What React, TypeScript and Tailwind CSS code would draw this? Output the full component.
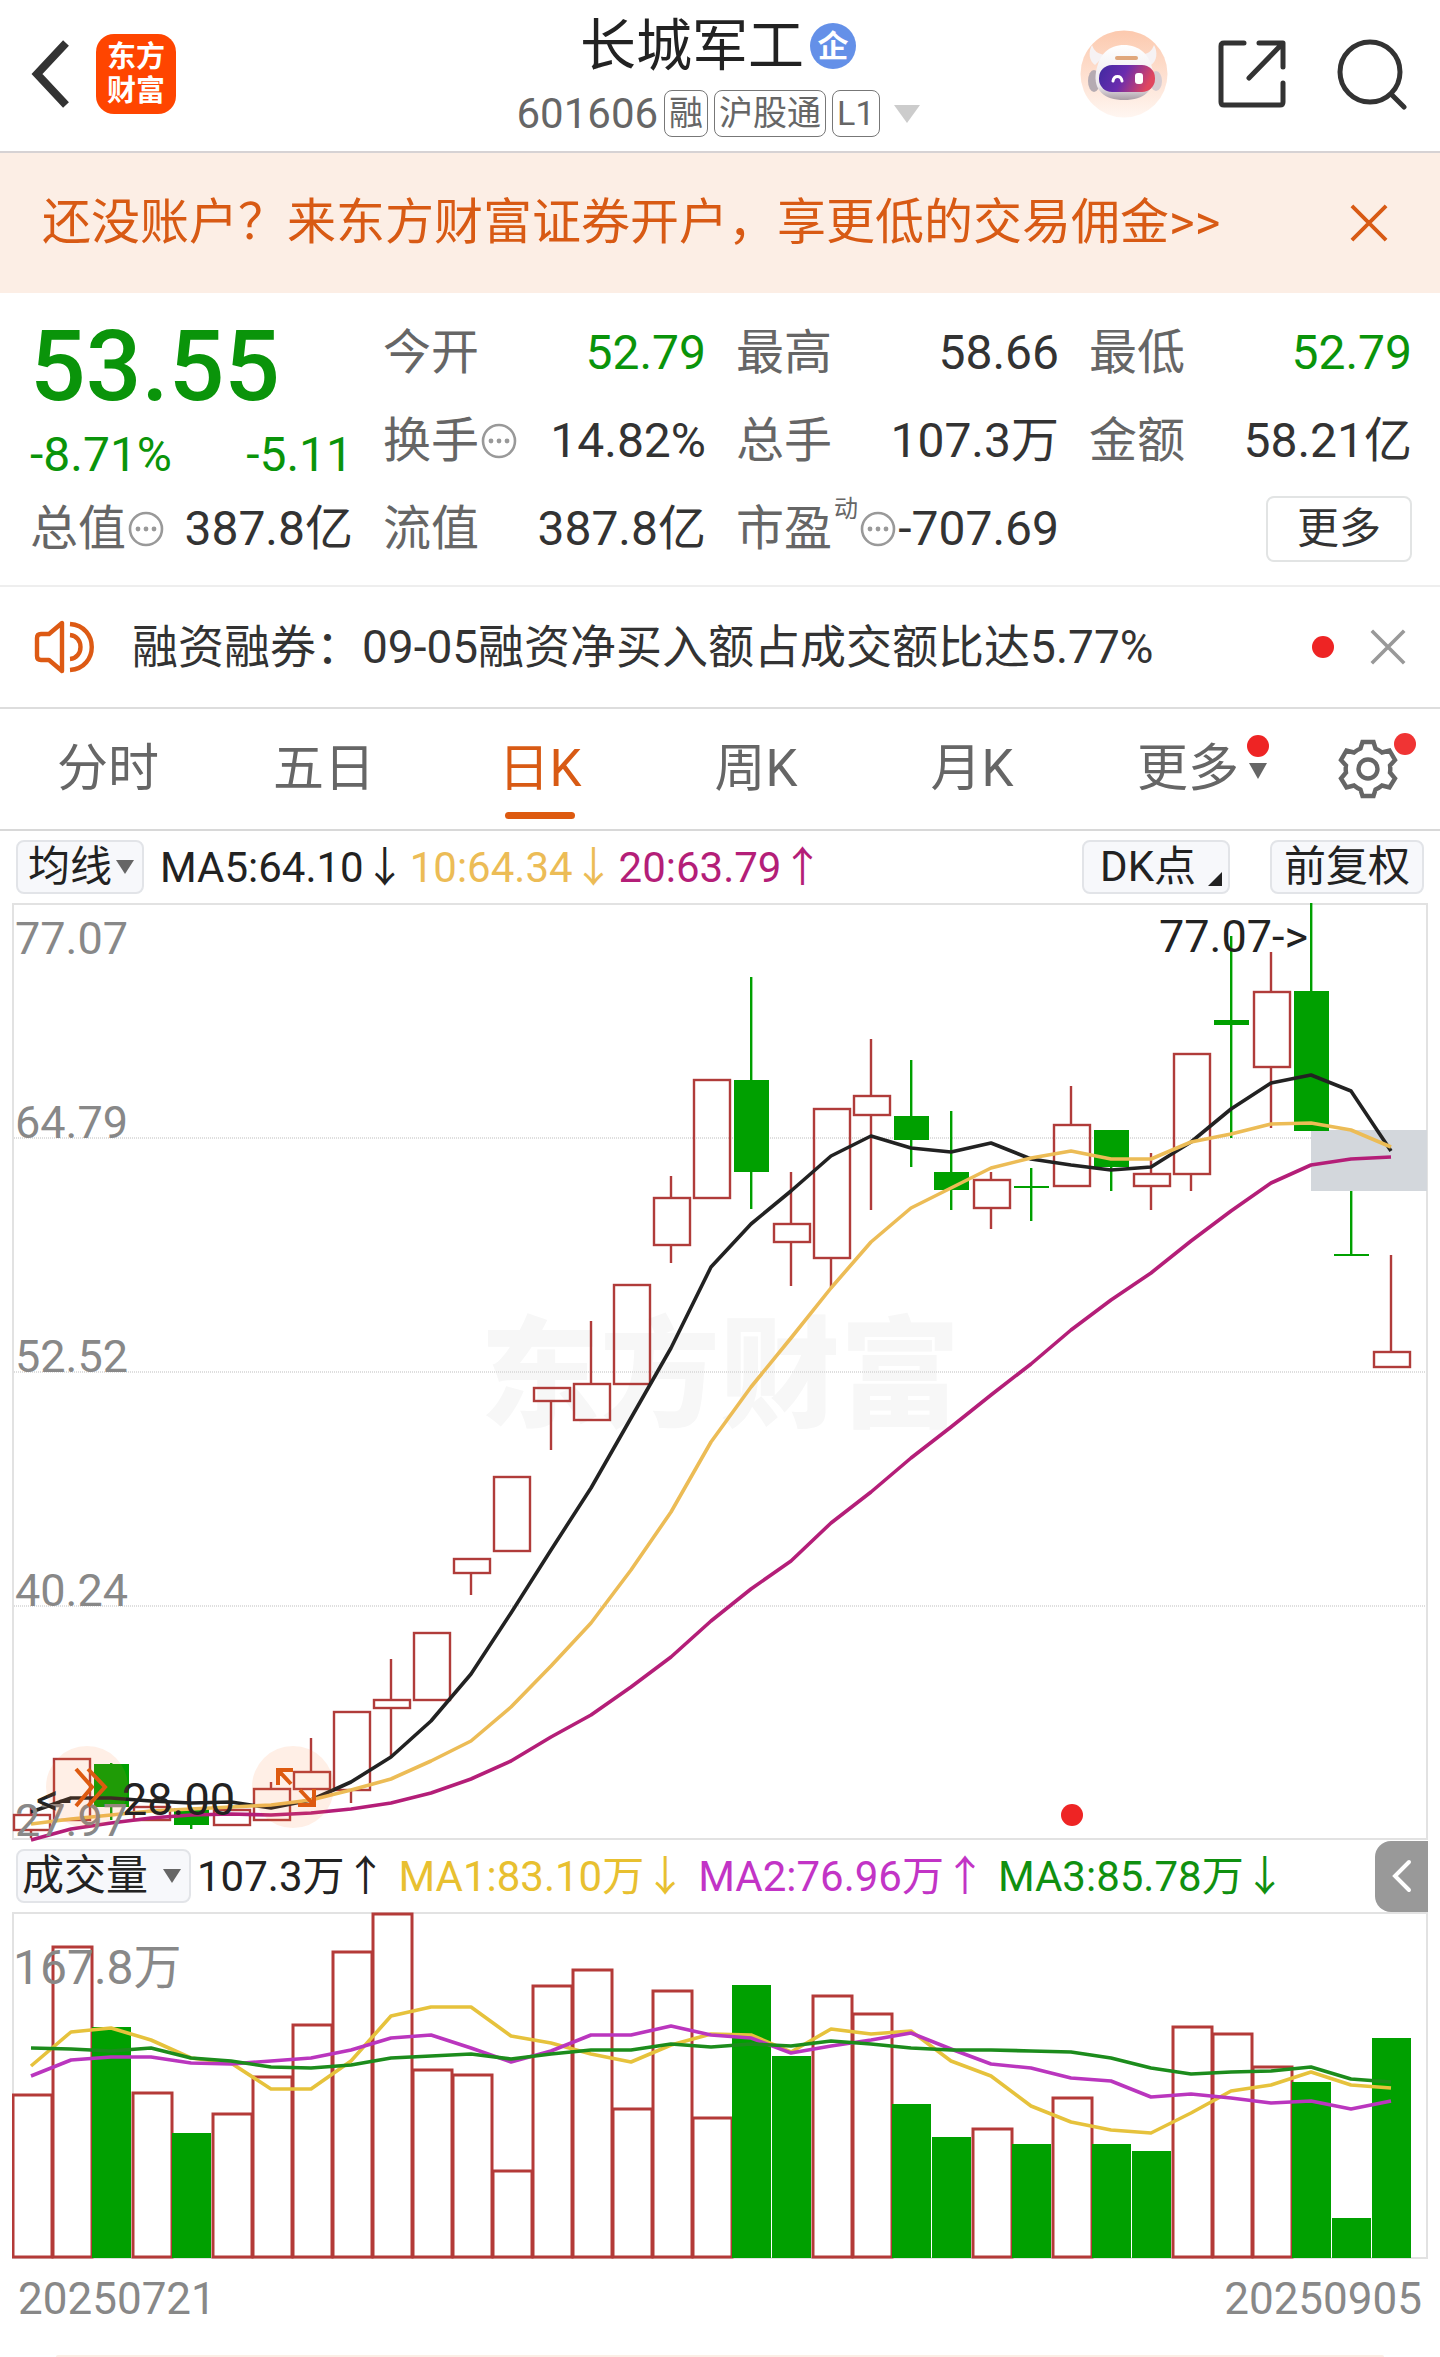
import React from "react";

type Candle = { up: boolean; top: number; bottom: number; high: number; low: number };

const STEP = 40;
const FIRST = 31;

const c = (up: boolean, top: number, bottom: number, high = top, low = bottom): Candle => ({ up, top, bottom, high, low });

const candles: Candle[] = [
  c(true, 1815, 1830, 1806, 1838),
  c(true, 1759, 1820),
  c(false, 1764, 1807, 1763, 1820),
  c(true, 1807, 1820),
  c(false, 1808, 1825, 1808, 1829),
  c(true, 1810, 1825, 1792),
  c(true, 1789, 1820, 1782),
  c(true, 1772, 1789, 1738),
  c(true, 1712, 1790, 1712, 1803),
  c(true, 1700, 1708, 1659, 1757),
  c(true, 1633, 1700),
  c(true, 1559, 1573, 1559, 1595),
  c(true, 1477, 1551),
  c(true, 1388, 1401, 1388, 1450),
  c(true, 1384, 1420, 1321),
  c(true, 1285, 1384),
  c(true, 1198, 1245, 1176, 1263),
  c(true, 1080, 1198),
  c(false, 1080, 1172, 977, 1209),
  c(true, 1224, 1242, 1172, 1286),
  c(true, 1109, 1258, 1109, 1288),
  c(true, 1096, 1115, 1039, 1210),
  c(false, 1116, 1140, 1060, 1167),
  c(false, 1172, 1190, 1111, 1210),
  c(true, 1180, 1208, 1172, 1229),
  c(false, 1186, 1188, 1168, 1221),
  c(true, 1125, 1186, 1086),
  c(false, 1130, 1167, 1130, 1191),
  c(true, 1174, 1186, 1153, 1210),
  c(true, 1054, 1174, 1054, 1191),
  c(false, 1020, 1025, 936, 1138),
  c(true, 992, 1067, 952, 1128),
  c(false, 991, 1131, 903),
  c(false, 1254, 1256, 1191, 1256),
  c(true, 1352, 1367, 1255),
];

const ma5 = [1812, 1798, 1798, 1801, 1803, 1802, 1808, 1800, 1782, 1757, 1721, 1674, 1613, 1550, 1488, 1418, 1348, 1267, 1224, 1191, 1156, 1136, 1148, 1152, 1143, 1159, 1165, 1170, 1167, 1142, 1109, 1083, 1075, 1091, 1151];
const ma10 = [1824, 1819, 1815, 1811, 1809, 1807, 1805, 1800, 1790, 1779, 1761, 1741, 1707, 1666, 1623, 1570, 1512, 1442, 1387, 1338, 1288, 1242, 1208, 1188, 1168, 1158, 1151, 1159, 1159, 1142, 1134, 1124, 1123, 1130, 1147];
const ma20 = [1840, 1829, 1823, 1818, 1815, 1814, 1815, 1813, 1809, 1803, 1793, 1779, 1761, 1737, 1715, 1687, 1657, 1621, 1589, 1561, 1523, 1492, 1458, 1427, 1395, 1364, 1330, 1300, 1273, 1241, 1211, 1183, 1165, 1159, 1157];

const volumeTops = [2095, 1947, 2027, 2093, 2133, 2114, 2077, 2025, 1952, 1914, 2070, 2075, 2171, 1986, 1970, 2109, 1991, 2118, 1985, 2056, 1996, 2014, 2104, 2137, 2129, 2144, 2098, 2144, 2151, 2027, 2034, 2067, 2082, 2218, 2038];
const fallingVolume = new Set([2, 4, 18, 19, 22, 23, 25, 27, 28, 32, 33, 34]);
const vma1 = [2066, 2032, 2028, 2040, 2058, 2063, 2089, 2089, 2061, 2016, 2007, 2007, 2036, 2043, 2054, 2062, 2045, 2034, 2035, 2052, 2029, 2034, 2031, 2061, 2076, 2106, 2122, 2130, 2133, 2113, 2091, 2085, 2072, 2085, 2088];
const vma2 = [2076, 2060, 2057, 2057, 2063, 2064, 2061, 2058, 2050, 2038, 2035, 2048, 2062, 2051, 2035, 2035, 2026, 2035, 2038, 2053, 2046, 2040, 2033, 2049, 2064, 2068, 2078, 2081, 2097, 2094, 2098, 2103, 2101, 2109, 2101];
const vma3 = [2048, 2049, 2051, 2048, 2058, 2061, 2067, 2068, 2065, 2058, 2056, 2054, 2059, 2054, 2050, 2050, 2044, 2047, 2044, 2046, 2041, 2044, 2048, 2050, 2050, 2051, 2052, 2058, 2068, 2074, 2072, 2071, 2067, 2079, 2082];

const points = (ys: number[]) => ys.map((y, i) => `${FIRST + STEP * i},${y}`).join(" ");

function Line({ ys, color }: { ys: number[]; color: string }) {
  return <polyline points={points(ys)} fill="none" stroke={color} strokeWidth={3.6} strokeLinejoin="round" />;
}

function MoreDots() {
  return (
    <svg viewBox="0 0 36 36" className="size-9 shrink-0" aria-hidden="true">
      <circle cx="18" cy="18" r="16" fill="none" stroke="#999" strokeWidth="2.6" />
      <circle cx="10" cy="18" r="2.4" fill="#999" />
      <circle cx="18" cy="18" r="2.4" fill="#999" />
      <circle cx="26" cy="18" r="2.4" fill="#999" />
    </svg>
  );
}

function Cross({ className, width }: { className: string; width: number }) {
  return (
    <svg viewBox="0 0 40 40" className={className} fill="none" stroke="currentColor" strokeWidth={width} aria-hidden="true">
      <path d="M2 2 38 38M38 2 2 38" />
    </svg>
  );
}

function Robot() {
  return (
    <svg viewBox="0 0 88 88" className="size-22" aria-hidden="true">
      <defs>
        <linearGradient id="halo" x1="0" y1="0" x2="0" y2="1">
          <stop offset="0" stopColor="#fcc9ae" />
          <stop offset="1" stopColor="#fff6f1" />
        </linearGradient>
        <linearGradient id="visor" x1="0" y1="0" x2="1" y2="0.25">
          <stop offset="0" stopColor="#3f2aa0" />
          <stop offset="0.5" stopColor="#6a2cae" />
          <stop offset="1" stopColor="#e0465f" />
        </linearGradient>
        <linearGradient id="shell" x1="0" y1="0" x2="0" y2="1">
          <stop offset="0" stopColor="#ffffff" />
          <stop offset="0.75" stopColor="#ece8ec" />
          <stop offset="1" stopColor="#a89ca4" />
        </linearGradient>
      </defs>
      <circle cx="44" cy="44" r="43.5" fill="url(#halo)" />
      <ellipse cx="14" cy="51" rx="6" ry="11" fill="#b5abb2" />
      <ellipse cx="76" cy="51" rx="6" ry="10" fill="#d6ccd2" />
      <path d="M12 15c-4 7-3 16 3 20l10-10c-7-1-11-4-13-10zM74 15c4 7 3 16-3 20L61 25c7-1 11-4 13-10z" fill="#f6f2f4" />
      <path d="M44 15c15 0 26 9 29 27 3 18-9 28-29 28S13 60 16 42c3-18 13-27 28-27z" fill="url(#shell)" />
      <rect x="35" y="26" width="23" height="4" rx="2" fill="#e0a77c" />
      <rect x="19" y="35" width="56" height="27" rx="13" fill="url(#visor)" />
      <path d="M33 51c1-6 8-6 9 0" fill="none" stroke="#fff" strokeWidth="3" strokeLinecap="round" />
      <rect x="55" y="43" width="8" height="11" rx="3" fill="#fff" />
    </svg>
  );
}

function Header() {
  const tag = "rounded-lg border border-[#777] px-1";
  return (
    <header className="grid h-[153px] grid-cols-[1fr_auto_1fr] border-b-2 border-[#d6d2d4] pr-8 pl-7">
      <div className="flex items-center gap-6 pb-1">
        <button aria-label="返回" className="text-[#333]">
          <svg viewBox="0 0 44 70" className="h-[70px] w-11" fill="none" stroke="currentColor" strokeWidth="8" aria-hidden="true">
            <path d="M38 4 9 35l29 31" />
          </svg>
        </button>
        <div className="flex size-20 flex-col items-center justify-center rounded-[18px] bg-[#ff4500] text-[29px] leading-[34px] font-bold text-white">
          <span>东方</span>
          <span>财富</span>
        </div>
      </div>
      <div className="flex flex-col items-center gap-1.5 pt-2">
        <h1 className="flex items-center gap-1.5 text-[56px] leading-[76px] text-[#222]">
          长城军工
          <span className="flex size-[46px] items-center justify-center rounded-full bg-[#6490e8] text-[31px] leading-none font-bold text-white">企</span>
        </h1>
        <div className="flex items-center gap-1.5 text-[34px] leading-[45px] text-[#666]">
          <span className="text-[42px]">601606</span>
          <span className={tag}>融</span>
          <span className={tag}>沪股通</span>
          <span className={tag}>L1</span>
          <svg viewBox="0 0 26 18" className="ml-2 h-[18px] w-[26px]" fill="#ccc" aria-hidden="true">
            <path d="M0 0h26L13 18z" />
          </svg>
        </div>
      </div>
      <div className="flex items-center justify-end gap-12 pb-1 text-[#333]">
        <button aria-label="智能助手"><Robot /></button>
        <button aria-label="分享">
          <svg viewBox="0 0 72 72" className="size-[72px]" fill="none" stroke="currentColor" strokeWidth="5" strokeLinecap="round" strokeLinejoin="round" aria-hidden="true">
            <path d="M28 5H8q-3 0-3 3v56q0 3 3 3h56q3 0 3-3V45M43 5h24v24M66 6 33 40" />
          </svg>
        </button>
        <button aria-label="搜索">
          <svg viewBox="0 0 72 72" className="size-[72px]" fill="none" stroke="currentColor" strokeWidth="5" strokeLinecap="round" aria-hidden="true">
            <circle cx="34" cy="34" r="30" />
            <path d="m56 57 12 12" />
          </svg>
        </button>
      </div>
    </header>
  );
}

const GREEN = "text-[#0a940a]";
const DARK = "text-[#333]";

function Stat({ label, value, color = DARK, dots = false, sup }: { label: string; value: string; color?: string; dots?: boolean; sup?: string }) {
  return (
    <div className="flex items-center justify-between whitespace-nowrap">
      <dt className="flex items-center gap-0.5 text-[#666]">
        {label}
        {sup && <sup className="-top-5 text-[24px] leading-none">{sup}</sup>}
        {dots && <MoreDots />}
      </dt>
      <dd className={color}>{value}</dd>
    </div>
  );
}

function Quote() {
  return (
    <section className="border-b-2 border-[#eee] pt-4 pr-7 pb-3 pl-[30px]">
      <dl className="grid auto-rows-[88px] grid-cols-4 gap-x-[30px] text-[48px]">
        <div className={`row-span-2 ${GREEN}`}>
          <dt className="text-[98px] leading-[116px] font-medium">53.55</dt>
          <dd className="flex justify-between leading-[60px]">
            <span>-8.71%</span>
            <span>-5.11</span>
          </dd>
        </div>
        <Stat label="今开" value="52.79" color={GREEN} />
        <Stat label="最高" value="58.66" />
        <Stat label="最低" value="52.79" color={GREEN} />
        <Stat label="换手" value="14.82%" dots />
        <Stat label="总手" value="107.3万" />
        <Stat label="金额" value="58.21亿" />
        <Stat label="总值" value="387.8亿" dots />
        <Stat label="流值" value="387.8亿" />
        <Stat label="市盈" value="-707.69" sup="动" dots />
        <div className="flex items-center justify-end">
          <button className="rounded-lg border-2 border-[#e2e4e4] px-[29px] text-[42px] leading-[62px] text-[#333]">更多</button>
        </div>
      </dl>
    </section>
  );
}

function News() {
  return (
    <section className="flex h-[122px] items-center border-b-2 border-[#ddd] pr-[34px] pl-8">
      <svg viewBox="0 0 64 56" className="h-14 w-16 shrink-0" fill="none" stroke="#dd5a14" strokeWidth="4.4" strokeLinejoin="round" aria-hidden="true">
        <path d="M30 4v48L17 41H9q-4 0-4-4V19q0-4 4-4h8zM38 16c14 1 14 23 0 24M38 5c29 2 29 44 0 46" />
      </svg>
      <a href="#news" className="ml-9 grow text-[46px] whitespace-nowrap text-[#333]">融资融券：09-05融资净买入额占成交额比达5.77%</a>
      <span className="size-[22px] rounded-full bg-[#ee2424]" />
      <button aria-label="关闭消息" className="ml-9 text-[#999]"><Cross className="size-9" width={4} /></button>
    </section>
  );
}

function Tabs() {
  const base = "relative flex h-full items-center justify-center";
  return (
    <nav className="grid h-[122px] grid-cols-[repeat(6,3fr)_2fr] border-b-2 border-[#d8d8d8] text-[51px] text-[#666]">
      <button className={base}>分时</button>
      <button className={base}>五日</button>
      <button className={`${base} text-[#d85a14]`} aria-current="page">
        日K
        <span className="absolute bottom-2.5 h-[7px] w-[70px] rounded-full bg-[#dd5a10]" />
      </button>
      <button className={base}>周K</button>
      <button className={base}>月K</button>
      <button className={base}>
        <span className="relative">
          更多
          <span className="absolute top-1 -right-[30px] size-[22px] rounded-full bg-[#ee2424]" />
          <svg viewBox="0 0 18 16" className="absolute top-8 -right-7 h-4 w-[18px]" fill="#666" aria-hidden="true">
            <path d="M0 0h18L9 16z" />
          </svg>
        </span>
      </button>
      <button className={base} aria-label="设置">
        <span className="relative">
          <svg viewBox="0 0 60 60" className="size-[60px]" fill="none" stroke="#666" strokeWidth="4.4" strokeLinejoin="miter" aria-hidden="true">
            <path d="M24.500 3H35.500L37.500 9.500Q41 11 44 13.500L51.500 11.500L57 21L52 26.500Q52.600 30 52 33.500L57 39.500L51.500 48.500L44 46.500Q41 49 37.500 50.500L35.500 57H24.500L22.500 50.500Q19 49 16 46.500L8.500 48.500L3 39.500L8 33.500Q7.400 30 8 26.500L3 21L8.500 11.500L16 13.500Q19 11 22.500 9.500Z" />
            <circle cx="30" cy="30" r="9.500" />
          </svg>
          <span className="absolute -top-1.5 -right-[18px] size-[22px] rounded-full bg-[#f03434]" />
        </span>
      </button>
    </nav>
  );
}

function Picker({ label, options, wide = false }: { label: string; options: string[]; wide?: boolean }) {
  return (
    <span className="relative flex items-center">
      <select
        aria-label={label}
        className={`h-[54px] appearance-none rounded-lg border-2 border-[#e2e4e8] bg-[#f7f8fb] text-[42px] leading-[50px] text-[#222] ${wide ? "w-[175px] pl-1" : "w-32 pl-2.5"}`}
      >
        {options.map((o) => (
          <option key={o}>{o}</option>
        ))}
      </select>
      <svg viewBox="0 0 18 14" className="pointer-events-none absolute right-2.5 h-3.5 w-[18px]" fill="#666" aria-hidden="true">
        <path d="M0 0h18L9 14z" />
      </svg>
    </span>
  );
}

function PriceBar() {
  return (
    <div className="flex h-[72px] items-center px-4 text-[42px] whitespace-nowrap">
      <Picker label="主图指标" options={["均线"]} />
      <span className="ml-4 text-[#222]">MA5:64.10↓</span>
      <span className="ml-1 text-[#ecbc56]">10:64.34↓</span>
      <span className="ml-1 text-[#b41e78]">20:63.79↑</span>
      <button className="relative ml-auto h-[54px] rounded-lg border-2 border-[#e2e4e8] bg-[#f7f8fb] pr-8 pl-4 leading-[50px] text-[#222]">
        DK点
        <svg viewBox="0 0 14 14" className="absolute right-1.5 bottom-1.5 size-3.5" fill="#222" aria-hidden="true">
          <path d="M14 0v14H0z" />
        </svg>
      </button>
      <button className="ml-10 h-[54px] rounded-lg border-2 border-[#e2e4e8] bg-[#f7f8fb] px-3 leading-[50px] text-[#222]">前复权</button>
    </div>
  );
}

function PriceChart() {
  return (
    <div className="relative mx-3">
      <svg viewBox="12 903 1416 937" className="block w-full overflow-visible" role="img" aria-label="日K线图">
        <text x="480" y="1418" fontSize="120" fontWeight="900" fill="#f7f7f7">东方财富</text>
        {[1138, 1372, 1606].map((y) => (
          <line key={y} x1="12" x2="1428" y1={y} y2={y} stroke="#dedede" strokeWidth="2" strokeDasharray="1 1" />
        ))}
        <path d="M13 903V1839M1427 903V1839" stroke="#e2e2e2" strokeWidth="2" />
        <path d="M12 904H1428M12 1839H1428" stroke="#e2e2e2" strokeWidth="2" />
        <rect x="1311" y="1130" width="116" height="61" fill="#d3d7dc" />
        {candles.map((k, i) => {
          const x = FIRST + STEP * i;
          return k.up ? (
            <g key={i} stroke="#b03c3a" strokeWidth="2.4" fill="none">
              <path d={`M${x} ${k.high}V${k.top}M${x} ${k.bottom}V${k.low}`} />
              <rect x={x - 17} y={k.top} width="36" height={k.bottom - k.top} />
            </g>
          ) : (
            <g key={i} fill="#00a000">
              <rect x={x - 1} y={k.high} width="2.4" height={k.low - k.high} />
              <rect x={x - 17} y={k.top} width="35" height={k.bottom - k.top} />
            </g>
          );
        })}
        <Line ys={ma5} color="#222" />
        <Line ys={ma10} color="#ecbc56" />
        <Line ys={ma20} color="#b41e78" />
        <circle cx="1072" cy="1815" r="11" fill="#ee2424" />
        <g fontSize="45" fill="#888">
          <text x="15" y="954">77.07</text>
          <text x="15" y="1138">64.79</text>
          <text x="15" y="1372">52.52</text>
          <text x="15" y="1606">40.24</text>
          <text x="15" y="1836">27.97</text>
        </g>
        <g fontSize="45" fill="#222">
          <text x="1308" y="952" textAnchor="end">77.07-&gt;</text>
          <text x="36" y="1815">&lt;-</text>
          <text x="122" y="1815">28.00</text>
        </g>
      </svg>
      <button aria-label="快进" className="absolute bottom-3 left-[34px] size-[82px] rounded-full bg-[#ff7832]/12">
        <svg viewBox="0 0 82 82" className="size-full" fill="none" stroke="#dd5a10" strokeWidth="4" aria-hidden="true">
          <path d="M30 23 46 41 30 60M42 23 59 41 42 60" />
        </svg>
      </button>
      <button aria-label="全屏" className="absolute bottom-3 left-60 size-[82px] rounded-full bg-[#ff7832]/12">
        <svg viewBox="0 0 82 82" className="size-full" fill="none" stroke="#dd5a10" strokeWidth="4" aria-hidden="true">
          <path d="M26 39V24h15M26 24 39 38M62 43v16H46M62 59 48 44" />
        </svg>
      </button>
    </div>
  );
}

function VolumeBar() {
  return (
    <div className="flex h-[72px] items-center pr-3 pl-4 text-[42px] whitespace-nowrap">
      <Picker label="副图指标" options={["成交量"]} wide />
      <span className="ml-1.5 text-[#222]">107.3万↑</span>
      <span className="ml-3 text-[#e8c030]">MA1:83.10万↓</span>
      <span className="ml-3 text-[#c234c6]">MA2:76.96万↑</span>
      <span className="ml-3 text-[#109010]">MA3:85.78万↓</span>
      <button aria-label="展开侧栏" className="ml-auto flex h-[71px] w-[53px] items-center justify-center rounded-l-2xl bg-[#999]">
        <svg viewBox="0 0 24 36" className="h-9 w-6" fill="none" stroke="#fff" strokeWidth="4" strokeLinecap="round" aria-hidden="true">
          <path d="M19 4 5 18l14 14" />
        </svg>
      </button>
    </div>
  );
}

function VolumeChart() {
  return (
    <div className="mx-3">
      <svg viewBox="12 1912 1416 348" className="block w-full" role="img" aria-label="成交量图">
        <rect x="13" y="1913" width="1414" height="345" fill="none" stroke="#e2e2e2" strokeWidth="2" />
        {volumeTops.map((y, i) => {
          const x = 12 + STEP * i;
          return fallingVolume.has(i) ? (
            <rect key={i} x={x} y={y} width="39" height={2258 - y} fill="#00a000" />
          ) : (
            <rect key={i} x={x + 1} y={y} width="39" height={2257 - y} fill="none" stroke="#b43a38" strokeWidth="3" />
          );
        })}
        <Line ys={vma1} color="#e6c23c" />
        <Line ys={vma2} color="#ba36be" />
        <Line ys={vma3} color="#1c8c1c" />
        <text x="13" y="1984" fontSize="48" fill="#888">167.8万</text>
      </svg>
      <div className="flex justify-between px-1.5 pt-2.5 text-[44px] leading-[58px] text-[#888]">
        <time dateTime="2025-07-21">20250721</time>
        <time dateTime="2025-09-05">20250905</time>
      </div>
    </div>
  );
}

export default function App() {
  return (
    <main lang="zh-CN" className="overflow-hidden bg-white font-['Roboto','Noto_Sans_CJK_SC',sans-serif]">
      <Header />
      <aside className="flex h-[140px] items-center justify-between bg-[#fceee5] pr-[52px] pl-[42px] text-[49px] whitespace-nowrap text-[#d85a14]">
        <a href="#open">还没账户？来东方财富证券开户，享更低的交易佣金&gt;&gt;</a>
        <button aria-label="关闭广告"><Cross className="size-[38px]" width={4} /></button>
      </aside>
      <Quote />
      <News />
      <Tabs />
      <PriceBar />
      <PriceChart />
      <VolumeBar />
      <VolumeChart />
      <div className="mx-14 mt-[27px] h-0.5 rounded-t-full bg-[#fceee5]" />
    </main>
  );
}
